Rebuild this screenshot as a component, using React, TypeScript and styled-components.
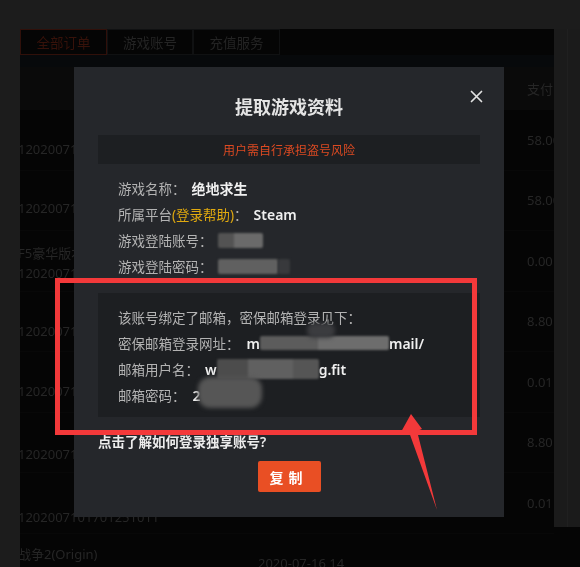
import React from "react";
import styled, { createGlobalStyle } from "styled-components";

const Global = createGlobalStyle`
  html, body { margin: 0; padding: 0; background: #1c1c1c; }
  body { font-family: "Noto Sans", "Noto Sans CJK SC", sans-serif; }
  * { box-sizing: border-box; }
`;

const FONT = `"Noto Sans", "Noto Sans CJK SC", sans-serif`;

const Page = styled.div`
  position: relative;
  width: 580px;
  height: 567px;
  overflow: hidden;
  background: #1c1c1c;
  display: flex;
  padding: 29px 0 0 20px;
  font-family: ${FONT};
  filter: blur(0.3px);
`;

const Panel = styled.div`
  width: 534px;
  background: #050505;
  display: flex;
  flex-direction: column;
  overflow: hidden;
`;

const Tabs = styled.div`
  display: flex;
  height: 26px;
  flex: none;
`;

const Tab = styled.div<{ $active?: boolean; $w: number }>`
  width: ${(p) => p.$w}px;
  display: flex;
  align-items: center;
  justify-content: center;
  font-size: 13.5px;
  border: 1px solid ${(p) => (p.$active ? "#30100a" : "#101112")};
  color: ${(p) => (p.$active ? "#37120a" : "#242424")};
`;

const Band = styled.div`
  height: 12px;
  flex: none;
  background: #07090b;
`;

const HeadRow = styled.div`
  height: 43px;
  flex: none;
  display: grid;
  grid-template-columns: 507px 1fr;
  align-items: center;
  background: #0a0a0a;
  color: #262626;
  font-size: 13px;
`;

const Row = styled.div`
  height: 60.5px;
  flex: none;
  display: grid;
  grid-template-columns: 238px 269px 1fr;
  font-size: 13px;
  color: #262626;
  border-bottom: 1px solid #080808;
`;

const LeftCell = styled.div<{ $top: number }>`
  padding-top: ${(p) => p.$top}px;
  display: flex;
  flex-direction: column;
  line-height: 20px;
  white-space: nowrap;
  text-indent: -2px;
`;

const MidCell = styled.div`
  display: flex;
  align-items: center;
  white-space: nowrap;
`;

const NumCell = styled.div`
  display: flex;
  align-items: center;
  white-space: nowrap;
`;

const Strip = styled.div`
  flex: 1;
  display: flex;
  flex-direction: column;
`;

const StripTrack = styled.div`
  height: 498px;
  background: #1b1b1b;
  display: flex;
  padding-left: 13px;
`;

const StripLine = styled.div`
  width: 1px;
  background: #202020;
`;

const StripRest = styled.div`
  flex: 1;
  background: #050505;
`;

/* modal */
const Modal = styled.div`
  position: absolute;
  left: 74px;
  top: 67px;
  width: 430px;
  height: 450px;
  background: #25272b;
  padding: 27px 24px 0;
  display: flex;
  flex-direction: column;
`;

const Title = styled.div`
  text-align: center;
  font-size: 18px;
  line-height: 26px;
  font-weight: 600;
  color: #e4e4e4;
`;

const Close = styled.button`
  position: absolute;
  right: 21px;
  top: 23px;
  width: 13px;
  height: 13px;
  padding: 0;
  border: 0;
  background: none;
  display: flex;
`;

const Warn = styled.div`
  margin-top: 15px;
  height: 29px;
  background: #1d1f22;
  display: flex;
  align-items: center;
  justify-content: center;
  font-size: 12px;
  color: #dc4a22;
`;

const Info = styled.div`
  padding: 11px 20px 0;
`;

const Line = styled.div`
  position: relative;
  height: 26px;
  display: flex;
  align-items: center;
  font-size: 13.5px;
  color: #b3b3b3;
  white-space: nowrap;
`;

const Value = styled.span<{ $gap?: number }>`
  margin-left: ${(p) => p.$gap ?? 6}px;
  color: #f0f0f0;
  font-weight: 600;
  font-size: 14px;
`;

const Help = styled.span`
  color: #e0a90f;
`;

const Blur = styled.span<{ $w: number; $h: number; $bg: string; $gap?: number; $r?: number }>`
  display: inline-block;
  margin-left: ${(p) => p.$gap ?? 0}px;
  width: ${(p) => p.$w}px;
  height: ${(p) => p.$h}px;
  background: ${(p) => p.$bg};
  border-radius: ${(p) => p.$r ?? 2}px;
  filter: blur(1.2px);
`;

const Blob = styled.span<{ $x: number; $y: number; $w: number; $h: number; $bg: string; $r: number }>`
  position: absolute;
  left: ${(p) => p.$x}px;
  top: ${(p) => p.$y}px;
  width: ${(p) => p.$w}px;
  height: ${(p) => p.$h}px;
  background: ${(p) => p.$bg};
  border-radius: ${(p) => p.$r}px;
  filter: blur(2px);
`;

const MailBox = styled.div`
  margin-top: 14px;
  background: #1d1f22;
  padding: 11px 20px 9px;
`;

const HelpLink = styled.div`
  margin-top: 15px;
  font-size: 13.5px;
  line-height: 20px;
  font-weight: 600;
  color: #ececec;
`;

const CopyBtn = styled.button`
  align-self: center;
  margin-top: 9px;
  width: 63px;
  height: 31px;
  border: 0;
  border-radius: 2px;
  background: #e94f24;
  color: #fff;
  font-family: ${FONT};
  font-size: 14px;
  font-weight: 600;
  letter-spacing: 5px;
  padding-left: 5px;
`;

const Frame = styled.div`
  position: absolute;
  left: 55px;
  top: 278px;
  width: 422px;
  height: 157px;
  border: 5px solid #f3393a;
`;

const ArrowSvg = styled.svg`
  position: absolute;
  left: 0;
  top: 0;
  pointer-events: none;
`;

type RowData = { name?: string; id: string; top: number; mid?: string; num: string };

const rows: RowData[] = [
  { id: "120200711017082", top: 29, num: "58.00" },
  { id: "120200711017081", top: 27, num: "58.00" },
  { name: "F5豪华版本", id: "120200711017080", top: 12, num: "0.00" },
  { id: "120200711017079", top: 29, num: "8.80" },
  { id: "120200711017078", top: 29, num: "0.01" },
  { id: "120200711017077", top: 31, num: "8.80" },
  { id: "1202007101701251011", top: 34, num: "0.01" },
  { name: "战争2(Origin)", id: "", top: 10, mid: "2020-07-16 14", num: "" },
];

export default function App() {
  return (
    <>
      <Global />
      <Page>
        <Panel>
          <Tabs>
            <Tab $active $w={87}>全部订单</Tab>
            <Tab $w={86}>游戏账号</Tab>
            <Tab $w={87}>充值服务</Tab>
          </Tabs>
          <Band />
          <HeadRow>
            <span />
            <span>支付</span>
          </HeadRow>
          {rows.map((r, i) => (
            <Row key={i}>
              <LeftCell $top={r.top}>
                {r.name && <span>{r.name}</span>}
                {r.id && <span>{r.id}</span>}
              </LeftCell>
              <MidCell>{r.mid}</MidCell>
              <NumCell>{r.num}</NumCell>
            </Row>
          ))}
        </Panel>
        <Strip>
          <StripTrack>
            <StripLine />
          </StripTrack>
          <StripRest />
        </Strip>

        <Modal>
          <Title>提取游戏资料</Title>
          <Close aria-label="关闭">
            <svg width="13" height="13" viewBox="0 0 13 13">
              <path d="M1.5 1.5 L11.5 11.5 M11.5 1.5 L1.5 11.5" stroke="#e2e2e2" strokeWidth="1.7" strokeLinecap="round" />
            </svg>
          </Close>
          <Warn>用户需自行承担盗号风险</Warn>
          <Info>
            <Line>
              游戏名称：<Value>绝地求生</Value>
            </Line>
            <Line>
              所属平台<Help>(登录帮助)</Help>：<Value>Steam</Value>
            </Line>
            <Line>
              游戏登陆账号：
              <Blur $gap={5} $w={45} $h={15} $bg="linear-gradient(90deg,#535353 0 35%,#6a6a6a 35%)" />
            </Line>
            <Line>
              游戏登陆密码：
              <Blur $gap={5} $w={60} $h={15} $bg="#606060" />
              <Blur $w={12} $h={15} $bg="#38393c" />
            </Line>
          </Info>
          <MailBox>
            <Line>该账号绑定了邮箱，密保邮箱登录见下：</Line>
            <Line>
              密保邮箱登录网址：
              <Value $gap={7}>m</Value>
              <Blur $w={129} $h={14} $bg="linear-gradient(90deg,#5c5c5c 0 45%,#6d6d6d 45%)" />
              <Value $gap={0}>mail/</Value>
              <Blob $x={189} $y={-7} $w={28} $h={15} $bg="#3b3c3f" $r={7} />
            </Line>
            <Line>
              邮箱用户名：
              <Value $gap={6}>w</Value>
              <Blur $w={102} $h={20} $bg="linear-gradient(90deg,#4c4c4c 0 30%,#606060 30% 75%,#555 75%)" />
              <Value $gap={0}>g.fit</Value>
            </Line>
            <Line>
              邮箱密码：<Value $gap={7}>2</Value>
              <Blob $x={80} $y={-5} $w={64} $h={31} $bg="#565656" $r={12} />
            </Line>
          </MailBox>
          <HelpLink>点击了解如何登录独享账号?</HelpLink>
          <CopyBtn>复制</CopyBtn>
        </Modal>

        <Frame />
        <ArrowSvg width="580" height="567" viewBox="0 0 580 567">
          <polygon points="411,414 422,429 417,431 437,510 409,432 401,432" fill="#f3393a" />
        </ArrowSvg>
      </Page>
    </>
  );
}
